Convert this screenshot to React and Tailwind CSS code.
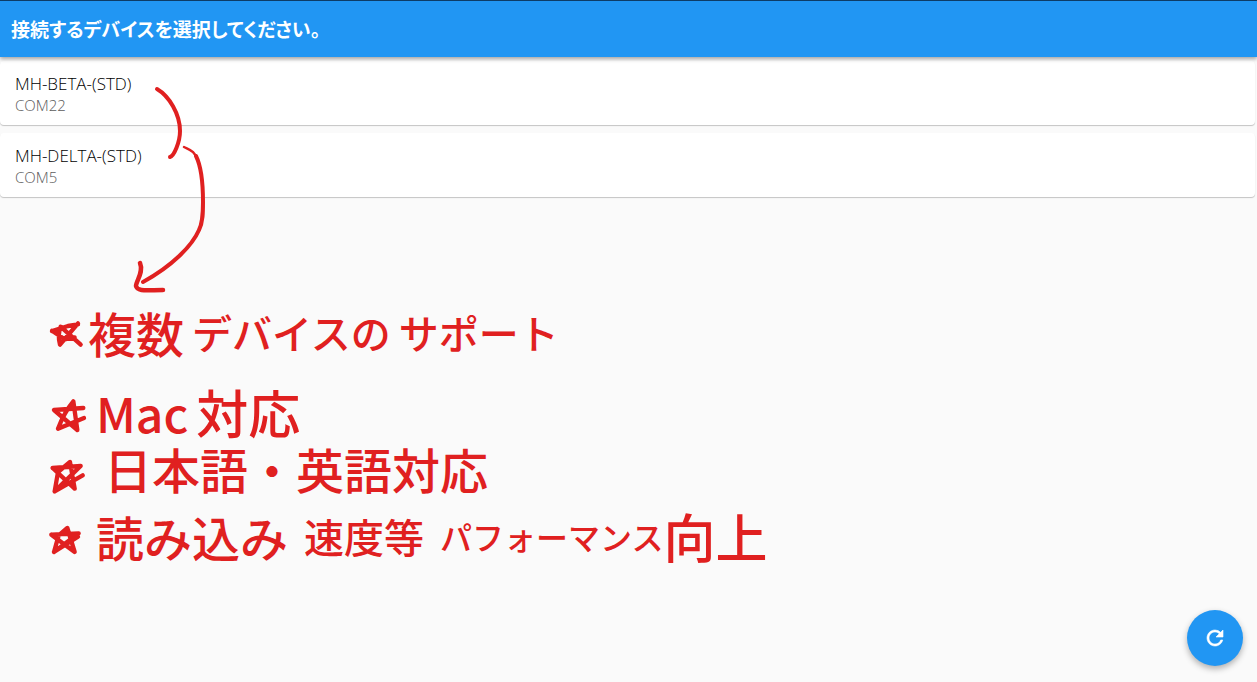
const devices = [
  { name: 'MH-BETA-(STD)', port: 'COM22' },
  { name: 'MH-DELTA-(STD)', port: 'COM5' },
];

const notes = [
  {
    id: 'devices',
    rowClass: '',
    star: 'M12 39 L60 24 L90 19 M90 16 L36 80 Q28 50 38 26 L98 80 M12 38 L50 64 L80 58',
    words: [
      { text: '複数', className: 'text-5xl' },
      { text: 'デバイスの', className: 'ml-2 text-[40px]' },
      { text: 'サポート', className: 'ml-2 text-[40px]' },
    ],
  },
  {
    id: 'mac',
    rowClass: 'mt-6',
    star: 'M108 60 L30 92 Q48 44 76 10 L88 96 L18 36 L106 30',
    words: [
      { text: 'Mac', className: 'ml-2 text-5xl' },
      { text: '対応', className: 'ml-2 text-[52px]' },
    ],
  },
  {
    id: 'language',
    rowClass: '',
    star: 'M14 42 L98 36 L20 112 L30 54 L66 24 L80 104 L14 42 M20 112 L104 64',
    words: [{ text: '日本語・英語対応', className: 'ml-4 text-5xl' }],
  },
  {
    id: 'performance',
    rowClass: 'mt-3',
    star: 'M10 38 L92 34 L18 90 L32 40 L58 18 L80 90 L10 38 M18 90 L90 44',
    words: [
      { text: '読み込み', className: 'ml-2 text-5xl' },
      { text: '速度等', className: 'ml-4 text-[40px]' },
      { text: 'パフォーマンス', className: 'ml-4 text-[32px]' },
      { text: '向上', className: 'text-[52px]' },
    ],
  },
];

function DeviceCard({ device }) {
  return (
    <button
      type="button"
      className="block w-full rounded bg-white px-[15px] pt-[11px] pb-[11px] text-left font-light shadow-[0_1px_1px_rgba(0,0,0,0.22)]"
    >
      <span className="block text-[17px] leading-6 text-black">{device.name}</span>
      <span className="block text-[15px] leading-[18px] text-[#5c5c5c]">{device.port}</span>
    </button>
  );
}

function RefreshIcon() {
  return (
    <svg
      width="24"
      height="24"
      viewBox="0 0 24 24"
      fill="currentColor"
      stroke="currentColor"
      strokeWidth="0.6"
      aria-hidden="true"
    >
      <path d="M17.65 6.35A7.96 7.96 0 0 0 12 4c-4.42 0-7.99 3.58-7.99 8s3.57 8 7.99 8c3.73 0 6.84-2.55 7.73-6h-2.08A5.99 5.99 0 0 1 12 18c-3.31 0-6-2.69-6-6s2.69-6 6-6c1.66 0 3.14.69 4.22 1.78L13 11h7V4l-2.35 2.35z" />
    </svg>
  );
}

// 2台のデバイスからメモへの矢印
function PenArrow() {
  return (
    <svg
      className="pointer-events-none absolute top-0 left-0"
      width="240"
      height="310"
      viewBox="0 0 240 310"
      fill="none"
      stroke="#e02020"
      strokeWidth="4"
      strokeLinecap="round"
      strokeLinejoin="round"
      aria-hidden="true"
    >
      <path d="M157 89 C169 96 180 114 180 131 C180 142 174 156 170 157" />
      <path d="M184 147 C190 150 195 151 198 161" strokeWidth="2.5" />
      <path d="M196 156 C201 166 203 186 203 202 C203 212 203 222 199 230 C192 246 172 266 143 282" />
      <path d="M140 263 C144 272 136 281 136 286 C137 292 148 290 163 290" strokeWidth="4.5" />
    </svg>
  );
}

export default function App() {
  return (
    <div className="relative min-h-screen bg-[#fafafa] font-['Open_Sans','Noto_Sans_CJK_JP',sans-serif]">
      <header className="relative flex h-[57px] items-center border-t border-[#0d3c66] bg-[#2196f3] px-[11px] shadow-[0_2px_4px_rgba(0,0,0,0.35)]">
        <h1 className="font-['Noto_Sans_CJK_JP',sans-serif] text-[19px] leading-7 font-bold text-white [font-feature-settings:'palt']">
          接続するデバイスを選択してください。
        </h1>
      </header>

      <main>
        <ul className="mr-0.5 space-y-2 pt-1">
          {devices.map((device) => (
            <li key={device.port}>
              <DeviceCard device={device} />
            </li>
          ))}
        </ul>

        {/* 手書きメモ */}
        <ul className="mt-[107px] pl-12 font-['Noto_Sans_CJK_JP',sans-serif] font-medium text-[#e02020]">
          {notes.map((note) => (
            <li key={note.id} className={`flex h-14 items-center leading-none whitespace-nowrap ${note.rowClass}`}>
              <svg
                className="mt-3 h-10 w-10 shrink-0"
                viewBox="0 0 120 120"
                fill="none"
                stroke="currentColor"
                strokeWidth="13"
                strokeLinecap="round"
                strokeLinejoin="round"
                aria-hidden="true"
              >
                <path d={note.star} />
              </svg>
              {note.words.map((word) => (
                <span key={word.text} className={`leading-none ${word.className}`}>
                  {word.text}
                </span>
              ))}
            </li>
          ))}
        </ul>
      </main>

      <PenArrow />

      <button
        type="button"
        aria-label="再読み込み"
        className="fixed right-3.5 bottom-4 flex h-14 w-14 items-center justify-center rounded-full bg-[#2196f3] text-white shadow-[0_3px_6px_rgba(0,0,0,0.3)]"
      >
        <RefreshIcon />
      </button>
    </div>
  );
}
